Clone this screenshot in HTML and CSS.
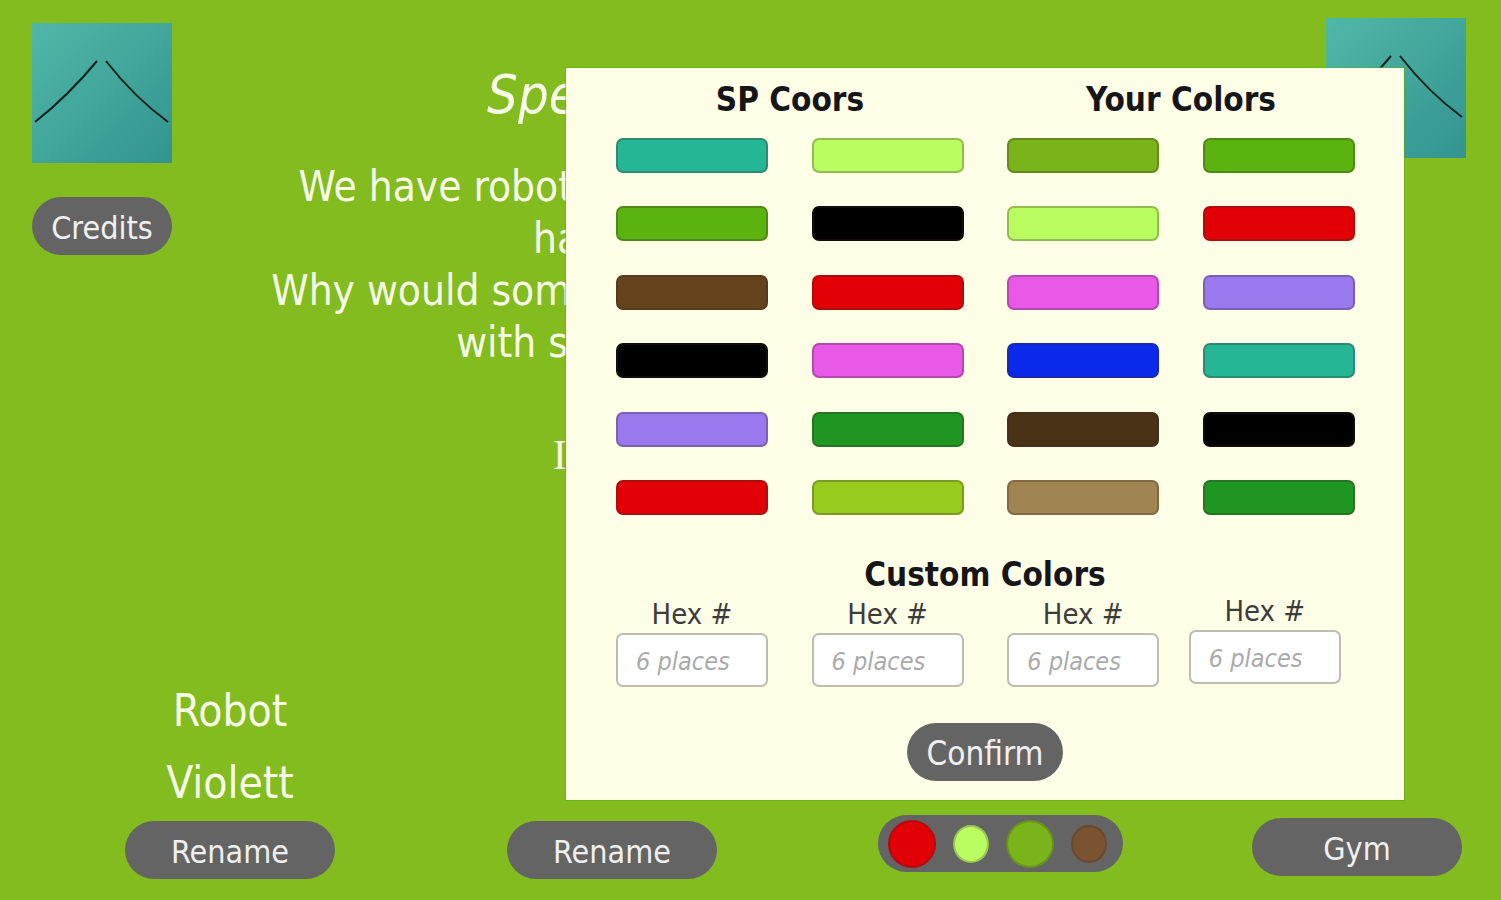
FILE: index.html
```html
<!DOCTYPE html>
<html lang="en">
<head>
  <meta charset="UTF-8">
  <meta name="viewport" content="width=device-width, initial-scale=1.0">
  <title>SP Colors</title>
  <link rel="stylesheet" href="styles.css">
</head>
<body>
  <div class="screen">
    <div class="top">
      <div class="top-left">
        <svg class="corner-icon" viewBox="0 0 140 140">
          <defs>
            <linearGradient id="tile" x1="0" y1="0" x2="1" y2="1">
              <stop offset="0" stop-color="#50b8a8"/>
              <stop offset="1" stop-color="#33948f"/>
            </linearGradient>
          </defs>
          <rect width="140" height="140" fill="url(#tile)"/>
          <path d="M3 99Q36 73 65 38M74 38Q102 74 136 99" fill="none" stroke="#10201f" stroke-width="2"/>
        </svg>
        <button class="pill credits">Credits</button>
      </div>
      <div class="story">
        <h1 class="story-title">Special Pigments Bay</h1>
        <p>We have robots in every colour you could want,</p>
        <p>have them ready to go</p>
        <p>Why would someone paint robots by hand and not</p>
        <p>with special pigments for that?</p>
        <p class="story-gap"><span class="serif-cap">I</span>nput your own color</p>
      </div>
      <div class="top-right">
        <svg class="corner-icon" viewBox="0 0 140 140">
          <rect width="140" height="140" fill="url(#tile)"/>
          <path d="M3 99Q36 73 65 38M74 38Q102 74 136 99" fill="none" stroke="#10201f" stroke-width="2"/>
        </svg>
      </div>
    </div>

    <div class="bottom">
      <div class="names">
        <div>Robot</div>
        <div>Violett</div>
      </div>
      <div class="bar">
        <button class="pill rename low">Rename</button>
        <button class="pill rename low">Rename</button>
        <div class="dots">
          <span class="dot big c-red"></span>
          <span class="dot c-lime"></span>
          <span class="dot big c-moss"></span>
          <span class="dot c-tan"></span>
        </div>
        <button class="pill rename mid">Gym</button>
      </div>
    </div>
  </div>

  <!-- color picker popup -->
  <div class="modal">
    <div class="modal-heads">
      <h2>SP Coors</h2>
      <h2>Your Colors</h2>
    </div>
    <div class="swatches">
      <button class="swatch c-teal"></button>
      <button class="swatch c-lime"></button>
      <button class="swatch c-moss"></button>
      <button class="swatch c-green"></button>

      <button class="swatch c-green"></button>
      <button class="swatch c-black"></button>
      <button class="swatch c-lime"></button>
      <button class="swatch c-red"></button>

      <button class="swatch c-brown"></button>
      <button class="swatch c-red"></button>
      <button class="swatch c-pink"></button>
      <button class="swatch c-violet"></button>

      <button class="swatch c-black"></button>
      <button class="swatch c-pink"></button>
      <button class="swatch c-blue"></button>
      <button class="swatch c-teal"></button>

      <button class="swatch c-violet"></button>
      <button class="swatch c-forest"></button>
      <button class="swatch c-dark"></button>
      <button class="swatch c-black"></button>

      <button class="swatch c-red"></button>
      <button class="swatch c-olive"></button>
      <button class="swatch c-khaki"></button>
      <button class="swatch c-forest"></button>
    </div>
    <h2 class="custom-head">Custom Colors</h2>
    <div class="hex-row">
      <label class="hex">Hex #<input type="text" placeholder="6 places"></label>
      <label class="hex">Hex #<input type="text" placeholder="6 places"></label>
      <label class="hex">Hex #<input type="text" placeholder="6 places"></label>
      <label class="hex hex-last">Hex #<input type="text" placeholder="6 places"></label>
    </div>
    <button class="pill confirm">Confirm</button>
  </div>
</body>
</html>
```

FILE: styles.css
```css
* {
  box-sizing: border-box;
  margin: 0;
  padding: 0;
}

body {
  height: 900px;
  overflow: hidden;
  background: #82bc1e;
  font-family: "DejaVu Sans Condensed", "DejaVu Sans", sans-serif;
  color: #f7fbe8;
}

.screen {
  height: 900px;
  display: flex;
  flex-direction: column;
  justify-content: space-between;
}

.top {
  display: flex;
  padding: 18px 35px 0 32px;
}

.top-left {
  width: 140px;
  padding-top: 5px;
  display: flex;
  flex-direction: column;
  gap: 34px;
}

.top-right {
  width: 140px;
}

.corner-icon {
  display: block;
  width: 140px;
  height: 140px;
}

.story {
  flex: 1;
  text-align: center;
  font-size: 42px;
  line-height: 52px;
  white-space: nowrap;
  overflow: hidden;
}

.story-title {
  font-size: 54px;
  font-style: italic;
  font-weight: normal;
  line-height: 60px;
  margin-top: 47px;
  margin-bottom: 36px;
}

.story-gap {
  margin-top: 60px;
}

.serif-cap {
  font-family: "Liberation Serif", serif;
}

.pill {
  border: none;
  background: #646464;
  color: #f0f0f0;
  font-family: inherit;
  font-size: 32px;
  height: 58px;
  padding-top: 4px;
  border-radius: 29px;
}

.credits {
  width: 140px;
}

.bottom {
  padding-bottom: 21px;
}

.names {
  width: 210px;
  margin-left: 125px;
  text-align: center;
  font-size: 44px;
  line-height: 72px;
}

.bar {
  display: flex;
  align-items: flex-start;
  padding-left: 125px;
  margin-top: -4px;
}

.rename {
  width: 210px;
}

.low {
  margin-top: 6px;
  margin-right: 172px;
}

.low + .dots {
  margin-left: -11px;
}

.mid {
  margin-top: 3px;
  margin-left: 129px;
}

.dots {
  width: 245px;
  height: 57px;
  border-radius: 29px;
  background: #646464;
  display: flex;
  align-items: center;
  padding-left: 10px;
  gap: 17px;
}

.dot {
  width: 36px;
  height: 38px;
  border-radius: 50%;
  border: 2px solid rgba(60, 40, 40, 0.25);
}

.dot.big {
  width: 48px;
  height: 48px;
}

.c-teal { background: #25b795; }
.c-lime { background: #b9fd61; }
.c-moss { background: #78b41a; }
.c-green { background: #5ab30f; }
.c-black { background: #000; }
.c-red { background: #e10005; }
.c-brown { background: #65431c; }
.c-pink { background: #e759e6; }
.c-violet { background: #9a78ed; }
.c-blue { background: #0a29ea; }
.c-forest { background: #1f9622; }
.c-dark { background: #4a3217; }
.c-olive { background: #97cc1f; }
.c-khaki { background: #a08553; }
.c-tan { background: #7a5430; }

.modal {
  position: absolute;
  left: 566px;
  top: 68px;
  width: 838px;
  height: 732px;
  background: #ffffe8;
  box-shadow: 0 0 0 1px rgba(90, 170, 10, 0.5);
  padding: 11px 50px 0;
  color: #16161a;
}

.modal h2 {
  font-size: 33px;
  line-height: 42px;
  font-weight: bold;
}

.modal-heads {
  display: grid;
  grid-template-columns: 348px 348px;
  column-gap: 43px;
  text-align: center;
}

.swatches {
  display: grid;
  grid-template-columns: repeat(4, 152px);
  column-gap: 43.6px;
  row-gap: 33.4px;
  margin-top: 17px;
}

.swatch {
  height: 35px;
  border: 2px solid rgba(60, 40, 40, 0.3);
  border-radius: 7px;
}

.modal .custom-head {
  margin-top: 39px;
  text-align: center;
}

.hex-row {
  display: grid;
  grid-template-columns: repeat(4, 152px);
  column-gap: 43.6px;
  margin-top: -1px;
}

.hex {
  display: flex;
  flex-direction: column;
  align-items: center;
  font-size: 29px;
  line-height: 38px;
  color: #3c3c3c;
}

.hex input {
  width: 152px;
  height: 54px;
  padding: 3px 0 0 18px;
  border: 2px solid #bdbdb0;
  border-radius: 7px;
  background: #fff;
  font-family: inherit;
  font-size: 25px;
  font-style: italic;
}

.hex input::placeholder {
  color: #aaa;
}

.hex-last {
  margin: -3px 14px 0 -14px;
}

.confirm {
  display: block;
  width: 156px;
  margin: 36px auto 0;
  font-size: 33px;
}
```
